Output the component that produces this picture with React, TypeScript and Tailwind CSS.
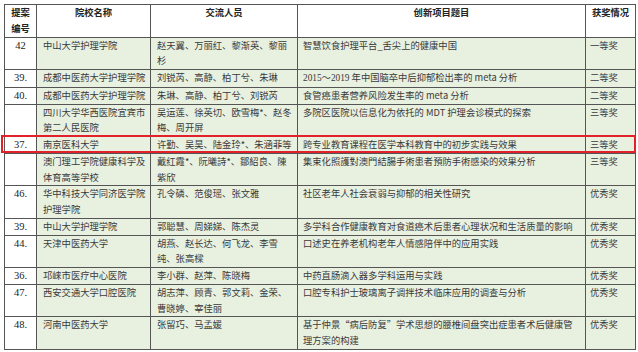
import type { ReactNode } from "react";

type Row = {
  no: string;
  school: string;
  people: string;
  title: ReactNode;
  award: string;
};

const serif = { fontFamily: '"Liberation Serif", "Noto Sans CJK SC", serif' };

const rows: Row[] = [
  {
    no: "42",
    school: "中山大学护理学院",
    people: "赵天翼、万丽红、黎渐英、黎丽\n杉",
    title: "智慧饮食护理平台_舌尖上的健康中国",
    award: "一等奖",
  },
  {
    no: "39.",
    school: "成都中医药大学护理学院",
    people: "刘锐芮、高静、柏丁兮、朱琳",
    title: (
      <>
        <span style={serif}>2015～2019</span> 年中国脑卒中后抑郁检出率的 meta 分析
      </>
    ),
    award: "二等奖",
  },
  {
    no: "40.",
    school: "成都中医药大学护理学院",
    people: "朱琳、高静、柏丁兮、刘锐芮",
    title: "食管癌患者营养风险发生率的 meta 分析",
    award: "二等奖",
  },
  {
    no: "",
    school: "四川大学华西医院宜宾市\n第二人民医院",
    people: "吴运莲、徐英切、欧雪梅*、赵冬\n梅、周开屏",
    title: "多院区医院以信息化为依托的 MDT 护理会诊模式的探索",
    award: "三等奖",
  },
  {
    no: "37.",
    school: "南京医科大学",
    people: "许勤、吴昊、陆金玲*、朱涵菲等",
    title: "跨专业教育课程在医学本科教育中的初步实践与效果",
    award: "三等奖",
  },
  {
    no: "",
    school: "澳门理工学院健康科学及\n体育高等学校",
    people: "戴红霞*、阮曦詩*、鄒紹良、陳\n紫欣",
    title: "集束化照護對澳門結腸手術患者預防手術感染的效果分析",
    award: "三等奖",
  },
  {
    no: "46.",
    school: "华中科技大学同济医学院\n护理学院",
    people: "孔令磷、范俊瑶、张文雅",
    title: "社区老年人社会衰弱与抑郁的相关性研究",
    award: "优秀奖",
  },
  {
    no: "39.",
    school: "中山大学护理学院",
    people: "郭聪慧、周娣娣、陈杰灵",
    title: "多学科合作健康教育对食道癌术后患者心理状况和生活质量的影响",
    award: "优秀奖",
  },
  {
    no: "44.",
    school: "天津中医药大学",
    people: "胡燕、赵长达、何飞龙、李雪\n纯、张高樑",
    title: "口述史在养老机构老年人情感陪伴中的应用实践",
    award: "优秀奖",
  },
  {
    no: "36.",
    school: "邛崃市医疗中心医院",
    people: "李小群、赵萍、陈晓梅",
    title: "中药直肠滴入器多学科运用与实践",
    award: "优秀奖",
  },
  {
    no: "47.",
    school: "西安交通大学口腔医院",
    people: "胡志萍、顾青、郭文莉、金荣、\n曹晓婷、宰佳丽",
    title: "口腔专科护士玻璃离子调拌技术临床应用的调查与分析",
    award: "优秀奖",
  },
  {
    no: "48.",
    school: "河南中医药大学",
    people: "张留巧、马孟媛",
    title: "基于仲景“病后防复”学术思想的腰椎间盘突出症患者术后健康管\n理方案的构建",
    award: "优秀奖",
  },
];

const cell = "border border-[#555] align-top whitespace-pre p-0";

export default function App() {
  return (
    <div className="w-[638px] h-[352px] bg-white overflow-hidden pt-[4px] pl-[4px]">
      <div className="relative">
        <table
          className="table-fixed border-collapse text-[9.3px] leading-[15.75px] text-[#3a3a3a]"
          style={{ fontFamily: '"Noto Sans CJK SC", "Noto Sans", sans-serif' }}
        >
          <colgroup>
            <col className="w-[32px]" />
            <col className="w-[114px]" />
            <col className="w-[147px]" />
            <col className="w-[288px]" />
            <col className="w-[50px]" />
          </colgroup>
          <thead>
            <tr className="bg-white font-bold text-[#222]">
              <th className={`${cell} text-center`}>{"提案\n编号"}</th>
              <th className={`${cell} text-center`}>院校名称</th>
              <th className={`${cell} text-center`}>交流人员</th>
              <th className={`${cell} text-center`}>创新项目题目</th>
              <th className={`${cell} text-center`}>获奖情况</th>
            </tr>
          </thead>
          <tbody>
            {rows.map((r, i) => (
              <tr key={i} className="bg-[#e8f0e0]">
                <td
                  className={`${cell} bg-white text-center text-[10.5px] text-[#222]`}
                  style={serif}
                >
                  {r.no}
                </td>
                <td className={`${cell} pl-[6px]`}>{r.school}</td>
                <td className={`${cell} pl-[6px]`}>{r.people}</td>
                <td className={`${cell} pl-[5px]`}>{r.title}</td>
                <td className={`${cell} pl-[4px]`}>{r.award}</td>
              </tr>
            ))}
          </tbody>
        </table>
        {/* highlight box around the 南京医科大学 row */}
        <div className="absolute left-[-3px] top-[131px] w-[635px] h-[18px] border-2 border-[#e3212b] pointer-events-none" />
      </div>
    </div>
  );
}
